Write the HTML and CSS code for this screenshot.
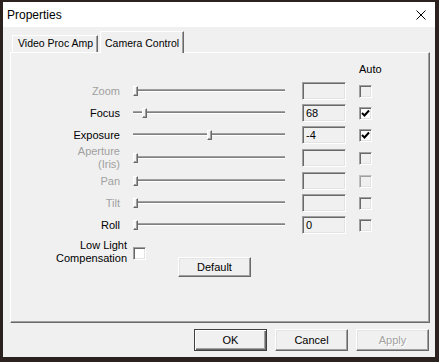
FILE: index.html
```html
<!DOCTYPE html>
<html lang="en">
<head>
    <meta charset="UTF-8">
    <title>Properties</title>
    <link rel="stylesheet" href="styles.css">
</head>
<body>
    <div class="window">
        <div class="titlebar">
            <span class="title">Properties</span>
            <svg class="close" width="10" height="10" viewBox="0 0 10 10">
                <path d="M0.5 0.5L9.5 9.5M9.5 0.5L0.5 9.5" stroke="#000" stroke-width="1" fill="none"/>
            </svg>
        </div>
        <div class="client">
            <div class="tabs">
                <div class="tab">Video Proc Amp</div>
                <div class="tab active">Camera Control</div>
            </div>
            <div class="panel">
                <div class="grid">
                    <div class="auto-head">Auto</div>

                    <div class="label disabled">Zoom</div>
                    <div class="slider"><div class="thumb" style="left: 0px"></div></div>
                    <div class="edit"></div>
                    <div class="check"></div>

                    <div class="label">Focus</div>
                    <div class="slider"><div class="thumb" style="left: 9px"></div></div>
                    <div class="edit">68</div>
                    <div class="check on"><svg width="9" height="9" viewBox="0 0 9 9"><polyline points="1,4 3.5,6.5 8,1.5" stroke="#000" stroke-width="2" fill="none"/></svg></div>

                    <div class="label">Exposure</div>
                    <div class="slider"><div class="thumb" style="left: 74px"></div></div>
                    <div class="edit">-4</div>
                    <div class="check on"><svg width="9" height="9" viewBox="0 0 9 9"><polyline points="1,4 3.5,6.5 8,1.5" stroke="#000" stroke-width="2" fill="none"/></svg></div>

                    <div class="label disabled">Aperture<br>(Iris)</div>
                    <div class="slider"><div class="thumb" style="left: 0px"></div></div>
                    <div class="edit"></div>
                    <div class="check"></div>

                    <div class="label disabled">Pan</div>
                    <div class="slider"><div class="thumb" style="left: 0px"></div></div>
                    <div class="edit"></div>
                    <div class="check faint"></div>

                    <div class="label disabled">Tilt</div>
                    <div class="slider"><div class="thumb" style="left: 0px"></div></div>
                    <div class="edit"></div>
                    <div class="check"></div>

                    <div class="label">Roll</div>
                    <div class="slider"><div class="thumb" style="left: 0px"></div></div>
                    <div class="edit">0</div>
                    <div class="check"></div>

                    <div class="lowlight">
                        <div class="lowlight-label">Low Light<br>Compensation</div>
                        <div class="check white"></div>
                        <button class="btn small">Default</button>
                    </div>
                </div>
            </div>
            <div class="buttons">
                <button class="btn default">OK</button>
                <button class="btn">Cancel</button>
                <button class="btn disabled-btn">Apply</button>
            </div>
        </div>
    </div>
</body>
</html>
```

FILE: styles.css
```css
body {
    margin: 0;
    background-color: #2b211e;
    font-family: "Liberation Sans", Arial, sans-serif;
    font-size: 11px;
    color: #000;
    overflow: hidden;
}
.window {
    width: 432px;
    height: 355px;
    margin: 2px 0 0 3px;
    background-color: #f0f0f0;
    display: flex;
    flex-direction: column;
}
.titlebar {
    height: 25px;
    background-color: #fff;
    display: flex;
    align-items: center;
    justify-content: space-between;
    padding: 0 9px 0 4px;
}
.title {
    font-size: 12px;
}
.close {
    display: block;
}
.client {
    padding: 4px 5px 0 7px;
}
.tabs {
    display: flex;
    align-items: flex-end;
    height: 21px;
    padding-left: 2px;
    font-size: 10.5px;
}
.tab {
    box-sizing: border-box;
    height: 17px;
    width: 86px;
    padding: 1px 0 0 5px;
    line-height: 13px;
    border: 1px solid;
    border-color: #fff #696969 transparent #fff;
    border-bottom: none;
    box-shadow: inset -1px 0 0 #a0a0a0;
    white-space: nowrap;
}
.tab.active {
    position: relative;
    z-index: 1;
    height: 22px;
    width: 84px;
    margin: 0 0 -1px 2px;
    padding: 5px 0 0 4px;
    background-color: #f0f0f0;
}
.panel {
    box-sizing: border-box;
    width: 420px;
    height: 271px;
    border: 1px solid;
    border-color: #fff #696969 #696969 #fff;
    box-shadow: inset -1px -1px 0 #a0a0a0;
    padding: 7px 0 0 4px;
}
.grid {
    display: grid;
    grid-template-columns: 105px 156px 44px auto;
    grid-template-rows: 20px repeat(3, 22px) 24px repeat(3, 22px) auto;
    column-gap: 13px;
    align-items: center;
}
.auto-head {
    grid-column: 4;
    align-self: start;
    line-height: 18px;
}
.label {
    text-align: right;
    line-height: 13px;
}
.disabled {
    color: #a0a0a0;
}
.slider {
    position: relative;
    width: 152px;
    height: 9px;
}
.slider::before {
    content: "";
    position: absolute;
    left: 0;
    right: 0;
    top: 2px;
    height: 1px;
    background-color: #808080;
    border-top: 1px solid #a0a0a0;
    border-bottom: 1px solid #fff;
}
.thumb {
    position: absolute;
    top: -1px;
    width: 5px;
    height: 10px;
    box-sizing: border-box;
    background-color: #f4f4f4;
    border: 1px solid;
    border-color: #fff #696969 #696969 #fff;
    box-shadow: inset -1px -1px 0 #a0a0a0;
}
.edit {
    box-sizing: border-box;
    height: 18px;
    border: 1px solid;
    border-color: #a0a0a0 #fff #fff #a0a0a0;
    box-shadow: inset 1px 1px 0 #696969, inset -1px -1px 0 #e3e3e3;
    padding-left: 3px;
    line-height: 16px;
}
.check {
    box-sizing: border-box;
    width: 13px;
    height: 13px;
    border: 1px solid;
    border-color: #a0a0a0 #fff #fff #a0a0a0;
    box-shadow: inset 1px 1px 0 #696969, inset -1px -1px 0 #e3e3e3;
    background-color: #f0f0f0;
    display: flex;
    align-items: center;
    justify-content: center;
}
.check.faint {
    border-color: #c0c0c0 #fff #fff #c0c0c0;
    box-shadow: inset 1px 1px 0 #a0a0a0, inset -1px -1px 0 #e3e3e3;
}
.check.on,
.check.white {
    background-color: #fff;
}
.check svg {
    display: block;
}
.lowlight {
    grid-column: 1 / -1;
    display: flex;
    align-items: flex-start;
    margin-top: 3px;
}
.lowlight-label {
    width: 112px;
    text-align: right;
    line-height: 13px;
}
.lowlight .check {
    margin: 8px 0 0 6px;
}
.btn {
    box-sizing: border-box;
    width: 73px;
    height: 22px;
    padding: 0;
    font-family: "Liberation Sans", Arial, sans-serif;
    font-size: 11px;
    color: #000;
    background-color: #f0f0f0;
    border: 1px solid;
    border-color: #fff #696969 #696969 #fff;
    box-shadow: inset -1px -1px 0 #a0a0a0, inset 1px 1px 0 #e3e3e3;
}
.btn.small {
    height: 20px;
    margin: 18px 0 0 32px;
}
.btn.default {
    border: 1px solid #404040;
    box-shadow: inset 1px 1px 0 #fff, inset -1px -1px 0 #696969, inset -2px -2px 0 #a0a0a0;
}
.btn.disabled-btn {
    color: #a0a0a0;
    text-shadow: 1px 1px 0 #fff;
}
.buttons {
    display: flex;
    justify-content: flex-end;
    gap: 8px;
    margin-top: 6px;
    padding-right: 1px;
}
```
